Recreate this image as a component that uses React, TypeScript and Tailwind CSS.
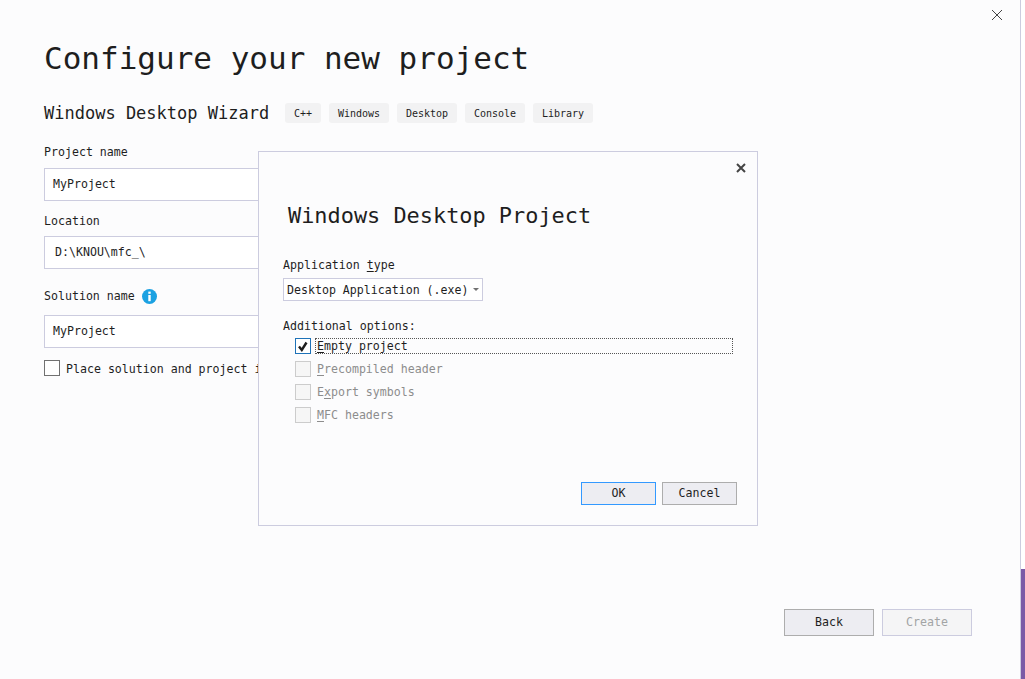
import React from "react";

const TAGS = ["C++", "Windows", "Desktop", "Console", "Library"];

const OPTIONS = [
  { key: "P", rest: "recompiled header" },
  { key: "x", before: "E", rest: "port symbols" },
  { key: "M", rest: "FC headers" },
];

const Field = ({ value, textPad }: { value: string; textPad: string }) => (
  <div className={`flex h-[33px] w-[420px] items-center border border-[#ccccdf] bg-white text-[#1e1e1e] ${textPad}`}>
    {value}
  </div>
);

const App: React.FC = () => {
  return (
    <div className="relative flex h-[679px] w-[1025px] overflow-hidden bg-[#fcfcfd] font-['DejaVu_Sans_Mono',monospace] text-[11.6px] text-[#1e1e1e]">
      <main className="w-[1021px] border-r border-[#ccccdf] pl-[44px] pt-[37px]">
        <h1 className="h-[42px] text-[31px] leading-[42px] text-[#1e1e1e]">Configure your new project</h1>

        <div className="mt-[24px] flex h-[20px] items-center">
          <h2 className="w-[241px] text-[17px] leading-[20px]">Windows Desktop Wizard</h2>
          <div className="flex gap-2">
            {TAGS.map((tag) => (
              <span
                key={tag}
                className={`flex h-[20px] items-center justify-center rounded-[3px] bg-[#f2f2f3] text-[10px] ${tag === "C++" ? "w-[36px]" : "w-[60px]"}`}
              >
                {tag}
              </span>
            ))}
          </div>
        </div>

        <div className="mt-[22px] flex h-[16px] items-center">Project name</div>
        <div className="mt-[7px]">
          <Field value="MyProject" textPad="pl-[8px]" />
        </div>

        <div className="mt-[13px] flex h-[16px] items-center">Location</div>
        <div className="mt-[6px]">
          <Field value="D:\KNOU\mfc_\" textPad="pl-[10px]" />
        </div>

        <div className="mt-[20px] flex h-[16px] items-center gap-[7px]">
          Solution name
          <svg className="mb-[1px]" width="15" height="15" viewBox="0 0 15 15">
            <circle cx="7.5" cy="7.5" r="7.5" fill="#1ba1e2" />
            <rect x="6.3" y="2.6" width="2.4" height="2.2" fill="#fff" />
            <rect x="6.3" y="6" width="2.4" height="6.2" fill="#fff" />
          </svg>
        </div>
        <div className="mt-[10px]">
          <Field value="MyProject" textPad="pl-[8px]" />
        </div>

        <label className="mt-[12px] flex h-[16px] items-center gap-[6px] whitespace-nowrap">
          <span className="h-[16px] w-[16px] shrink-0 border border-[#717171] bg-white" />
          <span className="pt-[3px]">Place solution and project i</span>
        </label>

        <div className="ml-[740px] mt-[233px] flex gap-2">
          <button className="h-[27px] w-[90px] border border-[#adadad] bg-[#ededf2] text-[11.6px]">Back</button>
          <button className="h-[27px] w-[90px] border border-[#ccccdf] bg-[#f5f5f6] text-[11.6px] text-[#a2a4a5]">Create</button>
        </div>
      </main>

      <div className="flex w-[4px] flex-col justify-end bg-white">
        <div className="h-[110px] bg-[#7b5aa6]" />
      </div>

      {/* window close */}
      <button className="absolute left-[991px] top-[9px]">
        <svg width="12" height="12" viewBox="0 0 12 12" stroke="#444" strokeWidth="1" fill="none">
          <path d="M1 1L11 11M11 1L1 11" />
        </svg>
      </button>

      {/* dialog on top of the page */}
      <section className="absolute left-[258px] top-[151px] flex h-[375px] w-[500px] flex-col border border-[#ccccdf] bg-[#fcfcfd] pl-[24px] pr-[20px]">
        <button className="absolute left-[477px] top-[11px]">
          <svg width="10" height="10" viewBox="0 0 10 10" stroke="#444" strokeWidth="2" fill="none">
            <path d="M1 1L9 9M9 1L1 9" />
          </svg>
        </button>

        <h2 className="ml-[5px] mt-[49px] h-[30px] text-[21.9px] leading-[30px]">Windows Desktop Project</h2>

        <div className="mt-[27px] flex h-[16px] items-center">
          <span>
            Application <u className="underline-offset-2">t</u>ype
          </span>
        </div>
        <div className="mt-[4px] flex h-[23px] w-[200px] items-center justify-between border border-[#ccccdf] bg-white pl-[3px] pr-[3px]">
          <span className="pt-[3px]">Desktop Application (.exe)</span>
          <svg width="6" height="3" viewBox="0 0 6 3">
            <path d="M0 0H6L3 3Z" fill="#717171" />
          </svg>
        </div>

        <div className="mt-[18px] flex h-[16px] items-center">Additional options:</div>

        <div className="ml-[12px] mt-[3px] flex h-[16px] w-[438px] items-center gap-[4px]">
          <span className="flex h-[16px] w-[16px] items-center justify-center border border-[#1e72b8] bg-white">
            <svg width="12" height="11" viewBox="0 0 12 11" fill="none" stroke="#1e1e1e" strokeWidth="2.4">
              <path d="M2 5.5L4.8 9L9.5 1.5" />
            </svg>
          </span>
          <span className="flex h-[16px] flex-1 items-center border border-dotted border-[#555] pl-[1px]">
            <span className="pt-[2px]">
              <u className="underline-offset-2">E</u>mpty project
            </span>
          </span>
        </div>

        <div className="ml-[12px] mt-[7px] flex flex-col gap-[7px] text-[#8d8d8d]">
          {OPTIONS.map((option) => (
            <div key={option.rest} className="flex h-[16px] items-center gap-[6px]">
              <span className="h-[16px] w-[16px] border border-[#cccccc] bg-[#f6f6f6]" />
              <span className="pt-[2px]">
                {option.before}
                <u className="underline-offset-2">{option.key}</u>
                {option.rest}
              </span>
            </div>
          ))}
        </div>

        <div className="ml-[298px] mt-[59px] flex gap-[6px]">
          <button className="h-[23px] w-[75px] border border-[#3399ff] bg-[#ededf2] text-[11.6px]">OK</button>
          <button className="h-[23px] w-[75px] border border-[#adadad] bg-[#ededf2] text-[11.6px]">Cancel</button>
        </div>
      </section>
    </div>
  );
};

export default App;
